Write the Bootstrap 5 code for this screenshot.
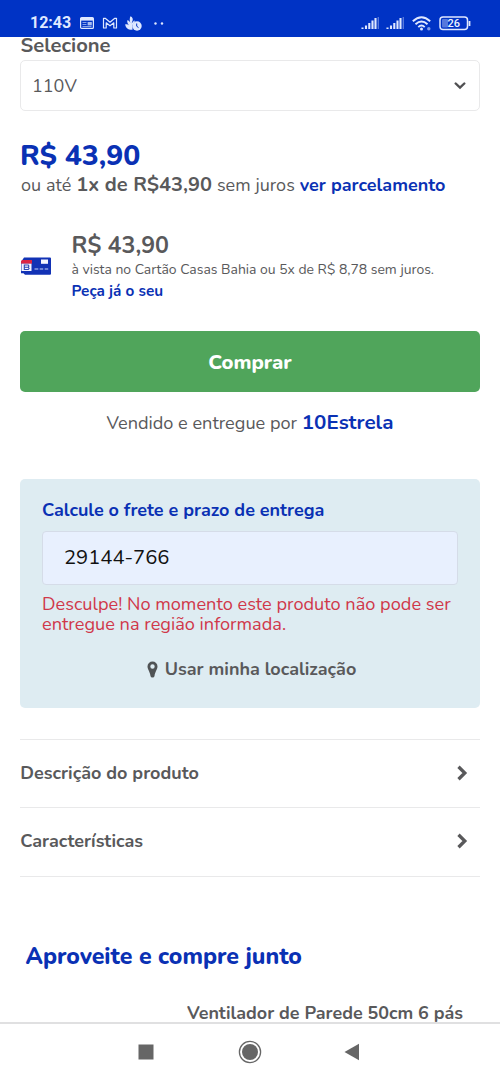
<!DOCTYPE html>
<html lang="pt-BR">
<head>
<meta charset="utf-8">
<meta name="viewport" content="width=device-width, initial-scale=1">
<title>Casas Bahia</title>
<link href="https://cdn.jsdelivr.net/npm/bootstrap@5.3.0/dist/css/bootstrap.min.css" rel="stylesheet">
<style>
:root{--azul:#0a31b4;--cinza:#59595b}
body{font-family:Nunito,Lato,"Open Sans",sans-serif;color:var(--cinza);width:500px;height:1082px;overflow:hidden;background:#fff}
svg{display:block;flex:none}
.azul{color:var(--azul)}
a{text-decoration:none}
.statusbar{height:37px;background:#0033c5;padding:9px 29px 0 30px;color:#dfe8ff;font-family:Roboto,sans-serif}
.statusbar>div{height:28px}
.clock{font-size:16px;font-weight:700;line-height:28px;width:50px}
.page-area{height:985px;padding:0 20px;overflow:hidden}
.lbl{height:23px;line-height:17px;font-size:20.2px;font-weight:700;padding-left:.5px}
.voltage{height:51px;border:1px solid #e9e9ea;border-radius:5px;padding:0 13px 0 11px;font-size:18px;line-height:1}
.price{font-size:28.4px;font-weight:800;line-height:34px;margin-top:28px}
.parc{font-size:18px;line-height:24px;padding-left:1px;white-space:nowrap;word-spacing:.25px}
.parc b{font-size:20px}
.parc a{font-weight:700}
.cartao{margin-top:36px;gap:20px;padding-left:.5px}
.cartao svg{margin:-3px 0 0 -1px;width:32px}
.cartao-valor{font-size:23.2px;line-height:26px}
.cartao-info{font-size:13.95px;line-height:22px}
.cartao-link{font-size:15.3px;line-height:20px}
.buy{height:61px;background:#50a55b;color:#fff;border:0;border-radius:5px;font-size:20.3px;font-weight:800;margin-top:30.4px;padding:0}
.seller{margin-top:17px;line-height:26px;font-size:18.15px}
.seller a{font-size:20.6px;font-weight:700}
.frete{background:#deecf2;border-radius:5px;margin-top:42.6px;height:229px;padding:19px 22px 0}
.frete-title{font-size:18px;line-height:24px}
.cep{height:54px;border:1px solid #d5dce8;border-radius:4px;background:#e8f0fe;color:#111;padding:0 21px;font-size:20.2px;margin-top:9px;line-height:1}
.erro{color:#d0384a;font-size:18.18px;line-height:20.5px;margin-top:9px;white-space:nowrap}
.local{font-size:18px;line-height:27px;margin-top:21px;gap:7px;padding-left:3px}
.rows{margin-top:31px;border-top:1px solid #e9e9ea}
.rowlink{height:68.4px;border-bottom:1px solid #e9e9ea;font-size:18px;font-weight:700;padding:0 12px 1.5px .3px;line-height:1}
.junto{font-size:23.1px;font-weight:800;line-height:32px;margin-top:64.5px;padding-left:5.500px}
.prod{font-size:17.95px;font-weight:700;line-height:24px;margin:28px 0 0 167px;white-space:nowrap}
.sysnav{height:60px;border-top:2px solid #e0e0e1;background:#fff;padding:0 140px 2px 138px}
</style>
</head>
<body>
<header class="statusbar d-flex justify-content-between">
 <div class="d-flex align-items-center">
  <span class="clock">12:43</span>
  <svg width="14" height="12" viewBox="0 0 14 12"><rect x=".6" y=".6" width="12.8" height="10.8" rx="1" fill="none" stroke="#dfe8ff" stroke-width="1.2"/><path d="M1 1h12v2.6H1z" fill="#dfe8ff"/><path d="M2.500 5.500h4M2.500 7.500h4M2.500 9.500h9" stroke="#a8bdf2" stroke-width=".8"/><rect x="7.6" y="5" width="4.2" height="3.4" fill="#a8bdf2"/></svg>
  <svg class="ms-2" width="16" height="12" viewBox="0 0 16 12"><path d="M1.500 11V1.300h1.700L8 5.200l4.800-3.900h1.700V11h-2.700V5.800L8 8.800 4.200 5.800V11z" fill="none" stroke="#dfe8ff" stroke-width="1.2" stroke-linejoin="round"/></svg>
  <svg style="margin-left:7px" width="17" height="15" viewBox="0 0 17 15"><path d="M5.500.3C7.500 1.200 8.200 3 7.600 4.600L6.600 7.500 9.300 4.300Q10.400 5.500 9 7L7.500 9v4.800C3 14 .5 12 .2 8.300c1.600-.4 2.800 0 3.800 1C2.500 7.500 2 6 2.300 4.300 4 4.600 4.800 5.600 5.400 7 4.500 4.500 4.500 2.300 5.500.3z" fill="#dfe8ff"/><circle cx="12" cy="10" r="4.700" fill="#dfe8ff"/><path d="M11.700 7.500v2.700l1.800 1.400" fill="none" stroke="#0033c5" stroke-width="1"/></svg>
  <svg style="margin-left:12px" width="11" height="3"><circle cx="1.500" cy="1.500" r="1.200" fill="#dfe8ff"/><circle cx="8" cy="1.500" r="1.200" fill="#dfe8ff"/></svg>
 </div>
 <div class="d-flex align-items-center">
  <svg width="18" height="14" viewBox="0 0 18 14"><path d="M1.500 11.500V13M5 9.500V13M8.300 7V13M11.500 4.500V13M14.500 2V13" stroke="#dfe8ff" stroke-width="2.100"/><path d="M17.300 1V13" stroke="#5678dc" stroke-width="1.400"/></svg>
  <svg style="margin-left:7px" width="18" height="14" viewBox="0 0 18 14"><path d="M1.500 11.500V13M5 9.500V13M8.300 7V13M11.500 4.500V13M14.500 2V13" stroke="#dfe8ff" stroke-width="2.100"/><path d="M17.300 1V13" stroke="#5678dc" stroke-width="1.400"/></svg>
  <svg style="margin-left:8px" width="20" height="15" viewBox="0 0 20 15"><path d="M.8 5.200Q9.500-2.800 18.200 5.200M3.500 8.200Q9.500 2.600 15.500 8.200M6.300 11.100Q9.500 8 12.700 11.100" fill="none" stroke="#dfe8ff" stroke-width="1.900"/><circle cx="9.500" cy="13" r="1.500" fill="#dfe8ff"/><circle cx="16.800" cy="12.700" r="1.700" fill="#7f9ae8"/></svg>
  <svg style="margin-left:7px" width="32" height="15" viewBox="0 0 32 15"><rect x="1" y="1" width="27.500" height="12.600" rx="3" fill="none" stroke="#dfe8ff" stroke-width="1.500"/><rect x="3" y="3" width="6" height="8.600" rx="1" fill="#5678dc"/><path d="M30.500 5v5" stroke="#dfe8ff" stroke-width="1.800"/><text x="14.700" y="11.300" font-family="Roboto" font-size="11" font-weight="500" text-anchor="middle" fill="#eef3ff">26</text></svg>
 </div>
</header>
<main class="page-area">
 <div class="lbl">Selecione</div>
 <div class="voltage d-flex align-items-center justify-content-between"><span>110V</span>
  <svg width="12" height="8" viewBox="0 0 12 8"><path d="M1.700 1.500 6 5.600l4.300-4.100" fill="none" stroke="#505052" stroke-width="2.400" stroke-linecap="round"/></svg></div>
 <div class="price azul">R$ 43,90</div>
 <div class="parc">ou até <b>1x de R$43,90</b> sem juros <a class="azul" href="#">ver parcelamento</a></div>
 <div class="cartao d-flex align-items-center">
  <svg width="32" height="18" viewBox="0 0 32 18"><path d="M4 .5h26a1 1 0 0 1 1 1v15.200a1 1 0 0 1-1 1H5l-1.500-1.500H1V5z" fill="#1232b5"/><path d="M1 6.700V4.500q0-1.500 1.500-1.500H12v3.700z" fill="#dc2444"/><rect x="1.500" y="6.700" width="10" height="7.300" fill="#f5f5ff"/><path d="M4.300 8h4l.6 1-.6 1.300.8 1.200-.8 1h-4zM4.300 10.300h4" stroke="#2c47b4" stroke-width="1.100" fill="none"/><rect x="21" y="2.500" width="7" height="4.300" fill="#f5f5ff"/><path d="M14.500 12h3.800M19.700 12h3.500M24.700 12h3.500" stroke="#c9d3f8" stroke-width="1.200"/></svg>
  <div>
   <div class="cartao-valor fw-bold">R$ 43,90</div>
   <div class="cartao-info">à vista no Cartão Casas Bahia ou 5x de R$ 8,78 sem juros.</div>
   <a class="cartao-link azul fw-bold d-block" href="#">Peça já o seu</a>
  </div>
 </div>
 <button class="buy w-100 d-block">Comprar</button>
 <div class="seller text-center">Vendido e entregue por <a class="azul" href="#">10Estrela</a></div>
 <section class="frete">
  <div class="frete-title azul fw-bold">Calcule o frete e prazo de entrega</div>
  <div class="cep d-flex align-items-center">29144-766</div>
  <div class="erro">Desculpe! No momento este produto não pode ser<br>entregue na região informada.</div>
  <div class="local d-flex align-items-center justify-content-center fw-bold">
   <svg width="11" height="17" viewBox="0 0 11 17"><path fill-rule="evenodd" d="M5.500.5A5 5 0 0 1 10.500 5.500C10.500 8.300 8.200 10.300 7.500 15Q7.300 16.500 5.500 16.500T3.500 15C2.800 10.300.5 8.300.5 5.500A5 5 0 0 1 5.500.5zM5.500 3.300A2.200 2.200 0 1 0 5.500 7.700 2.200 2.200 0 0 0 5.500 3.300z" fill="#505355"/></svg>
   <span>Usar minha localização</span>
  </div>
 </section>
 <div class="rows">
  <div class="rowlink d-flex align-items-center justify-content-between"><span>Descrição do produto</span>
   <svg width="12" height="16" viewBox="0 0 12 16"><path d="M2.500 1.800 8.800 8l-6.300 6.200" fill="none" stroke="#59595b" stroke-width="3.300"/></svg></div>
  <div class="rowlink d-flex align-items-center justify-content-between"><span>Características</span>
   <svg width="12" height="16" viewBox="0 0 12 16"><path d="M2.500 1.800 8.800 8l-6.300 6.200" fill="none" stroke="#59595b" stroke-width="3.300"/></svg></div>
 </div>
 <div class="junto azul">Aproveite e compre junto</div>
 <div class="prod">Ventilador de Parede 50cm 6 pás</div>
</main>
<footer class="sysnav d-flex align-items-center justify-content-between">
 <svg width="16" height="16"><rect x=".5" y=".5" width="15" height="15" fill="#666"/></svg>
 <svg width="24" height="24" style="margin-left:2px"><circle cx="12" cy="12" r="10.600" fill="none" stroke="#666" stroke-width="1.300"/><circle cx="12" cy="12" r="8" fill="#666"/></svg>
 <svg width="16" height="18"><path d="M.5 9 15 .8v16.400z" fill="#666"/></svg>
</footer>
<script src="https://cdn.jsdelivr.net/npm/bootstrap@5.3.0/dist/js/bootstrap.bundle.min.js"></script>
</body>
</html>
